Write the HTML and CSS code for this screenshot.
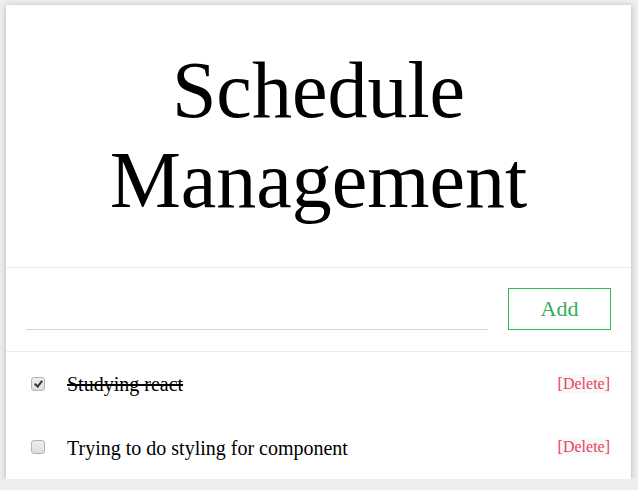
FILE: index.html
```html
<!DOCTYPE html>
<html>
<head>
<meta charset="utf-8">
<link rel="stylesheet" href="styles.css">
</head>
<body>
<div class="card">
  <header class="head">
    <h1 class="title">Schedule Management</h1>
  </header>
  <form class="form">
    <input class="field" type="text">
    <button class="add" type="button">Add</button>
  </form>
  <ul class="list">
    <li class="item">
      <input class="check" type="checkbox" checked>
      <span class="text done">Studying react</span>
      <span class="del">[Delete]</span>
    </li>
    <li class="item">
      <input class="check" type="checkbox">
      <span class="text">Trying to do styling for component</span>
      <span class="del">[Delete]</span>
    </li>
  </ul>
</div>
</body>
</html>
```
FILE: styles.css
```css
html, body {
  margin: 0;
  background: #eceef0;
  font-family: "Liberation Serif", "Times New Roman", serif;
}
body {
  padding: 5px 7px 0 6px;
}
.card {
  width: 625px;
  background: #fff;
  box-shadow: 0 1px 6px rgba(0,0,0,0.25);
}
.head {
  padding: 40px 0 42px;
  border-bottom: 1px solid #e9ecef;
}
.title {
  margin: 0;
  font-weight: normal;
  font-size: 80px;
  line-height: 90px;
  text-align: center;
  color: #000;
}
.form {
  display: flex;
  gap: 20px;
  padding: 20px 20px 21px;
  border-bottom: 1px solid #e9ecef;
  margin: 0;
}
.field {
  flex: 1;
  border: 0;
  border-bottom: 1px solid #ced4da;
  outline: none;
  font: inherit;
  font-size: 20px;
  padding: 0;
  background: transparent;
}
.add {
  width: 103px;
  height: 42px;
  border: 1px solid #2fbd4b;
  background: #fff;
  color: #32ad5a;
  font-family: "Liberation Serif", serif;
  font-size: 22px;
  padding: 0;
}
.list {
  list-style: none;
  margin: 0;
  padding: 0;
}
.item {
  display: flex;
  align-items: center;
  height: 63.5px;
  padding: 0 21px 0 21px;
}
.check {
  -webkit-appearance: none;
  appearance: none;
  width: 14px;
  height: 14px;
  margin: 0 3px 0 4px;
  border: 1px solid #b4b4b4;
  border-radius: 3px;
  background: linear-gradient(#eeeeee, #dddddd);
  position: relative;
  box-sizing: border-box;
}
.check:checked::after {
  content: "";
  position: absolute;
  left: 4px;
  top: 1px;
  width: 3px;
  height: 6px;
  border: solid #333;
  border-width: 0 2px 2px 0;
  transform: rotate(40deg);
}
.text {
  flex: 1;
  margin-left: 19px;
  padding-top: 2px;
  font-size: 20px;
  color: #000;
}
.done {
  text-decoration: line-through;
}
.del {
  font-size: 16px;
  color: #f0405e;
  background: #f7f8fa;
}
```
